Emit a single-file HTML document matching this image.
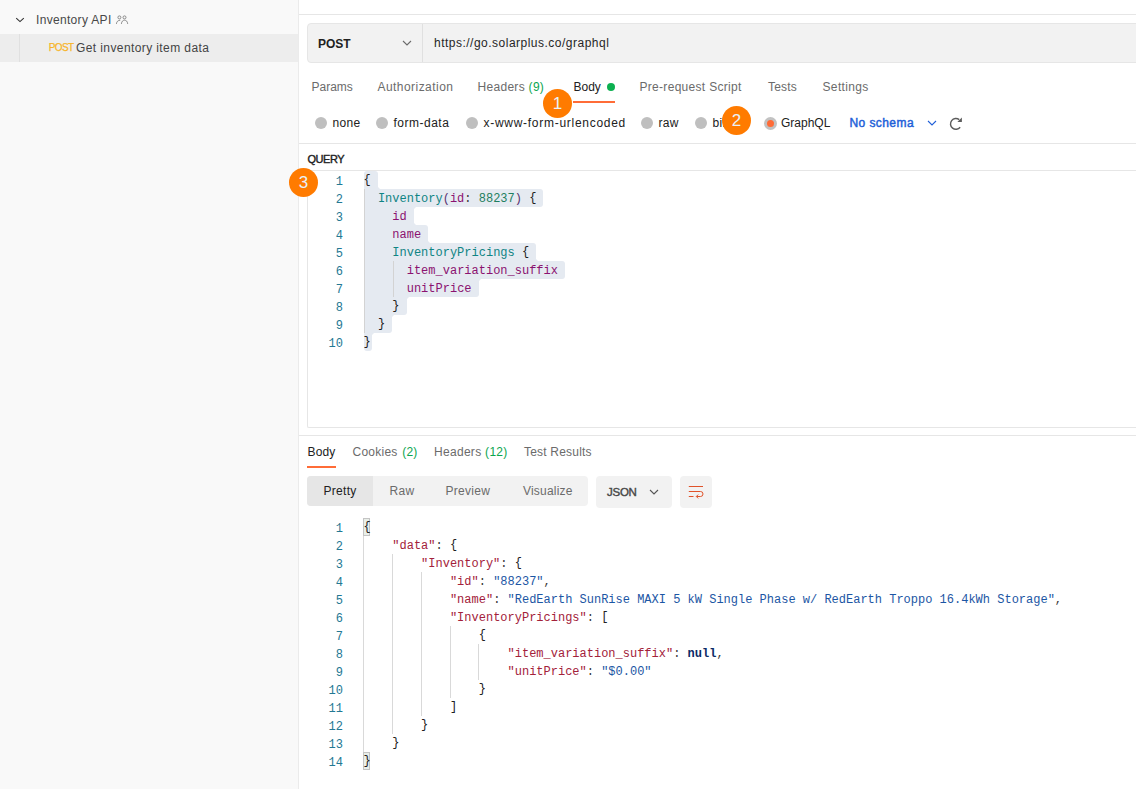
<!DOCTYPE html>
<html><head><meta charset="utf-8">
<style>
html,body{margin:0;padding:0;width:1136px;height:789px;overflow:hidden;background:#fff;}
body{position:relative;font-family:"Liberation Sans",sans-serif;font-size:12px;color:#212121;}
.a{position:absolute;}
.t{position:absolute;white-space:pre;line-height:14px;}
#side{position:absolute;left:0;top:0;width:298px;height:789px;background:#f9f9f9;border-right:1px solid #ebebeb;}
.hl{position:absolute;height:1px;background:#e6e6e6;}
.tab{color:#6b6b6b;}
.green{color:#0ba64f;}
.radio{position:absolute;width:12px;height:12px;border-radius:50%;background:#bfbfbf;top:117px;}
.badge{position:absolute;width:29px;height:29px;border-radius:50%;background:#ff7b00;color:#e9f1f8;font-size:17px;line-height:29px;text-align:center;}
.ln{position:absolute;left:299px;width:44px;text-align:right;font-family:"Liberation Mono",monospace;font-size:12px;line-height:18px;color:#237893;white-space:pre;}
.cl{position:absolute;left:363.5px;font-family:"Liberation Mono",monospace;font-size:12px;line-height:18px;white-space:pre;color:#212121;}
.sel{position:absolute;left:364px;height:18px;background:#e5eaf1;}
.cc{position:absolute;width:3px;height:3px;}
.br{position:relative;top:-0.8px;}
.guide{position:absolute;width:1px;background:#d3d3d3;}
.g2{background:#d9d9d9;}
.bm{position:absolute;left:363px;width:5px;height:16px;border:1px solid #c4c4c4;background:#e9efe9;}
.seg{position:absolute;top:476px;height:30px;background:#f2f2f2;border-radius:4px;}
</style></head><body>

<!-- sidebar -->
<div id="side">
  <svg class="a" style="left:10px;top:10px" width="20" height="20" viewBox="0 0 20 20"><path d="M6.2 8.1 L10 11.6 L13.8 8.1" fill="none" stroke="#333" stroke-width="1.1"/></svg>
  <div class="t" style="left:36px;top:13px;color:#484848;letter-spacing:0.32px">Inventory API</div>
  <svg class="a" style="left:110px;top:10px" width="25" height="20" viewBox="0 0 25 20"><g fill="none" stroke="#8a8a8a" stroke-width="1"><circle cx="9.4" cy="7.4" r="1.5"/><circle cx="14.5" cy="7.4" r="1.5"/><path d="M6.4 13.9 C6.6 11.6 8 10.3 10.3 10.2"/><path d="M11.4 13.9 C11.6 11.5 12.9 10.2 14.5 10.2 C16.2 10.2 17.5 11.5 17.7 13.9"/></g></svg>
  <div class="a" style="left:0;top:34px;width:298px;height:28px;background:#ededed"></div>
  <div class="a" style="left:19px;top:34px;width:1px;height:28px;background:#e0e0e0"></div>
  <div class="t" style="left:48.8px;top:40.6px;font-size:10px;color:#f7b52a;-webkit-text-stroke:0.25px #f7b52a;letter-spacing:-0.65px">POST</div>
  <div class="t" style="left:76px;top:40.5px;color:#444;letter-spacing:0.4px">Get inventory item data</div>
</div>

<!-- top line -->
<div class="hl" style="left:299px;top:14px;width:837px"></div>

<!-- url bar -->
<div class="a" style="left:307px;top:23px;width:840px;height:38px;background:#f2f2f2;border:1px solid #e6e6e6;border-radius:4px"></div>
<div class="a" style="left:422px;top:24px;width:1px;height:38px;background:#e0e0e0"></div>
<div class="t" style="left:318px;top:37px;font-weight:bold;color:#212121">POST</div>
<svg class="a" style="left:402px;top:40px" width="10" height="7" viewBox="0 0 10 7"><path d="M1 1 L5 5 L9 1" fill="none" stroke="#6b6b6b" stroke-width="1.1"/></svg>
<div class="t" style="left:434px;top:35.5px;color:#262626;letter-spacing:0.49px">https://go.solarplus.co/graphql</div>

<!-- request tabs -->
<div class="t tab" style="left:311.5px;top:79.5px">Params</div>
<div class="t tab" style="left:377.5px;top:79.5px;letter-spacing:0.45px">Authorization</div>
<div class="t tab" style="left:477.5px;top:79.5px;letter-spacing:0.3px">Headers <span class="green">(9)</span></div>
<div class="t" style="left:573.5px;top:79.5px;color:#212121">Body</div>
<div class="a" style="left:607px;top:83px;width:8px;height:8px;border-radius:50%;background:#0cb050"></div>
<div class="t tab" style="left:639.5px;top:79.5px;letter-spacing:0.3px">Pre-request Script</div>
<div class="t tab" style="left:768px;top:79.5px;letter-spacing:0.2px">Tests</div>
<div class="t tab" style="left:822.5px;top:79.5px;letter-spacing:0.35px">Settings</div>
<div class="a" style="left:573px;top:101px;width:42px;height:2px;background:#ff6c37"></div>

<!-- body type radios -->
<div class="radio" style="left:315px"></div>
<div class="t" style="left:332.5px;top:116px;letter-spacing:0.3px">none</div>
<div class="radio" style="left:376px"></div>
<div class="t" style="left:393.5px;top:116px;letter-spacing:0.5px">form-data</div>
<div class="radio" style="left:466px"></div>
<div class="t" style="left:483.5px;top:116px;letter-spacing:0.72px">x-www-form-urlencoded</div>
<div class="radio" style="left:641px"></div>
<div class="t" style="left:658.5px;top:116px;letter-spacing:0.3px">raw</div>
<div class="radio" style="left:695px"></div>
<div class="t" style="left:712.5px;top:116px;letter-spacing:0.3px">binary</div>
<div class="a" style="left:764px;top:117px;width:13px;height:13px;border-radius:50%;background:#c2c2c2"></div>
<div class="a" style="left:767px;top:120px;width:7px;height:7px;border-radius:50%;background:#ff6c37"></div>
<div class="t" style="left:781px;top:116px;color:#212121">GraphQL</div>
<div class="t" style="left:849.5px;top:116px;color:#2160d8;-webkit-text-stroke:0.45px #2160d8;letter-spacing:0.42px">No schema</div>
<svg class="a" style="left:927px;top:120px" width="10" height="7" viewBox="0 0 10 7"><path d="M1 1 L5 5 L9 1" fill="none" stroke="#2160d8" stroke-width="1.1"/></svg>
<svg class="a" style="left:949px;top:115px" width="15" height="16" viewBox="949 115 15 16"><path d="M959.22 119.64 A5.4 5.4 0 1 0 960.16 127.22" fill="none" stroke="#5c5c5c" stroke-width="1.45"/><path d="M961.9 117.6 L961.9 122.1 L957.4 122.1 Z" fill="#5c5c5c"/></svg>

<div class="hl" style="left:299px;top:143px;width:837px"></div>

<!-- query -->
<div class="t" style="left:307.5px;top:152px;font-size:11px;color:#212121;letter-spacing:-0.45px;-webkit-text-stroke:0.4px #212121">QUERY</div>
<div class="a" style="left:307px;top:170px;width:840px;height:256px;border:1px solid #e6e6e6;border-radius:0 0 2px 2px;border-right:none"></div>
<div class="sel" style="top:171px;width:13.8px;border-radius:3px 3px 0px 0px"></div>
<div class="cc" style="left:377.8px;top:186px;background:radial-gradient(circle at 100% 0%, #fff 2.6px, #e5eaf1 3.2px)"></div>
<div class="sel" style="top:189px;width:179.4px;border-radius:0px 3px 3px 0px"></div>
<div class="sel" style="top:207px;width:49.8px;border-radius:0px 0px 0px 0px"></div>
<div class="cc" style="left:413.8px;top:207px;background:radial-gradient(circle at 100% 100%, #fff 2.6px, #e5eaf1 3.2px)"></div>
<div class="cc" style="left:413.8px;top:222px;background:radial-gradient(circle at 100% 0%, #fff 2.6px, #e5eaf1 3.2px)"></div>
<div class="sel" style="top:225px;width:64.2px;border-radius:0px 3px 0px 0px"></div>
<div class="cc" style="left:428.2px;top:240px;background:radial-gradient(circle at 100% 0%, #fff 2.6px, #e5eaf1 3.2px)"></div>
<div class="sel" style="top:243px;width:172.2px;border-radius:0px 3px 0px 0px"></div>
<div class="cc" style="left:536.2px;top:258px;background:radial-gradient(circle at 100% 0%, #fff 2.6px, #e5eaf1 3.2px)"></div>
<div class="sel" style="top:261px;width:201.0px;border-radius:0px 3px 3px 0px"></div>
<div class="sel" style="top:279px;width:114.6px;border-radius:0px 0px 3px 0px"></div>
<div class="cc" style="left:478.6px;top:279px;background:radial-gradient(circle at 100% 100%, #fff 2.6px, #e5eaf1 3.2px)"></div>
<div class="sel" style="top:297px;width:42.6px;border-radius:0px 0px 3px 0px"></div>
<div class="cc" style="left:406.6px;top:297px;background:radial-gradient(circle at 100% 100%, #fff 2.6px, #e5eaf1 3.2px)"></div>
<div class="sel" style="top:315px;width:28.2px;border-radius:0px 0px 3px 0px"></div>
<div class="cc" style="left:392.2px;top:315px;background:radial-gradient(circle at 100% 100%, #fff 2.6px, #e5eaf1 3.2px)"></div>
<div class="sel" style="top:333px;width:7.6px;border-radius:0px 0px 3px 3px"></div>
<div class="cc" style="left:371.6px;top:333px;background:radial-gradient(circle at 100% 100%, #fff 2.6px, #e5eaf1 3.2px)"></div>
<div class="ln" style="top:172.5px">1</div>
<div class="cl" style="top:171.8px"><span class="br" style="color:#212121">{</span></div>
<div class="ln" style="top:190.5px">2</div>
<div class="cl" style="top:189.8px">  <span style="color:#0f8484">Inventory</span><span style="color:#5a3370">(</span><span style="color:#8b1270">id</span><span style="color:#3b3b3b">:</span> <span style="color:#1f7f5f">88237</span><span style="color:#5a3370">)</span> <span class="br" style="color:#212121">{</span></div>
<div class="ln" style="top:208.5px">3</div>
<div class="cl" style="top:207.8px">    <span style="color:#8b1270">id</span></div>
<div class="ln" style="top:226.5px">4</div>
<div class="cl" style="top:225.8px">    <span style="color:#8b1270">name</span></div>
<div class="ln" style="top:244.5px">5</div>
<div class="cl" style="top:243.8px">    <span style="color:#0f8484">InventoryPricings</span> <span class="br" style="color:#212121">{</span></div>
<div class="ln" style="top:262.5px">6</div>
<div class="cl" style="top:261.8px">      <span style="color:#8b1270">item_variation_suffix</span></div>
<div class="ln" style="top:280.5px">7</div>
<div class="cl" style="top:279.8px">      <span style="color:#8b1270">unitPrice</span></div>
<div class="ln" style="top:298.5px">8</div>
<div class="cl" style="top:297.8px">    <span class="br" style="color:#212121">}</span></div>
<div class="ln" style="top:316.5px">9</div>
<div class="cl" style="top:315.8px">  <span class="br" style="color:#212121">}</span></div>
<div class="ln" style="top:334.5px">10</div>
<div class="cl" style="top:333.8px"><span class="br" style="color:#212121">}</span></div>
<div class="guide" style="left:364px;top:189px;height:144px"></div>
<div class="guide" style="left:393px;top:261px;height:36px"></div>

<div class="hl" style="left:299px;top:435px;width:837px"></div>

<!-- response tabs -->
<div class="t" style="left:307.5px;top:445px;color:#212121;letter-spacing:0.15px">Body</div>
<div class="t tab" style="left:352.5px;top:445px;letter-spacing:0.25px">Cookies <span class="green" style="margin-left:1px">(2)</span></div>
<div class="t tab" style="left:434px;top:445px;letter-spacing:0.3px">Headers <span class="green">(12)</span></div>
<div class="t tab" style="left:524px;top:445px;letter-spacing:0.2px">Test Results</div>
<div class="a" style="left:307px;top:466px;width:29px;height:2px;background:#ff6c37"></div>

<div class="seg" style="left:307px;width:281px"></div>
<div class="seg" style="left:307px;width:66px;background:#e6e6e6;border-radius:4px 0 0 4px"></div>
<div class="t" style="left:323.5px;top:484px;color:#212121;letter-spacing:0.3px">Pretty</div>
<div class="t tab" style="left:389.5px;top:484px;letter-spacing:0.3px">Raw</div>
<div class="t tab" style="left:445.5px;top:484px;letter-spacing:0.3px">Preview</div>
<div class="t tab" style="left:523px;top:484px;letter-spacing:0.2px">Visualize</div>

<div class="seg" style="left:596px;width:76px;height:32px"></div>
<div class="t" style="left:607px;top:485px;font-size:11.5px;color:#474747;-webkit-text-stroke:0.4px #474747;letter-spacing:-0.25px">JSON</div>
<svg class="a" style="left:649px;top:489px" width="10" height="7" viewBox="0 0 10 7"><path d="M1 1 L5 5 L9 1" fill="none" stroke="#555" stroke-width="1.1"/></svg>
<div class="seg" style="left:680px;width:32px;height:32px"></div>
<svg class="a" style="left:686px;top:483px" width="20" height="18" viewBox="686 483 20 18"><g fill="none" stroke="#e0532a" stroke-width="1"><path d="M688.8 486.5 H703"/><path d="M688.8 491.5 H700.5 A2.5 2.5 0 0 1 700.5 496.5 H696.5"/><path d="M688.8 496.5 H693.5"/><path d="M698.2 494.6 L696.3 496.5 L698.2 498.4"/></g></svg>

<div class="bm" style="top:518px"></div>
<div class="bm" style="top:752px"></div>
<div class="ln" style="top:519.5px">1</div>
<div class="cl" style="top:518.8px"><span class="br" style="color:#212121">{</span></div>
<div class="ln" style="top:537.5px">2</div>
<div class="cl" style="top:536.8px">    <span style="color:#a3213a">"data"</span><span style="color:#3b3b3b">: </span><span class="br" style="color:#212121">{</span></div>
<div class="ln" style="top:555.5px">3</div>
<div class="cl" style="top:554.8px">        <span style="color:#a3213a">"Inventory"</span><span style="color:#3b3b3b">: </span><span class="br" style="color:#212121">{</span></div>
<div class="ln" style="top:573.5px">4</div>
<div class="cl" style="top:572.8px">            <span style="color:#a3213a">"id"</span><span style="color:#3b3b3b">: </span><span style="color:#1c56a4">"88237"</span><span style="color:#3b3b3b">,</span></div>
<div class="ln" style="top:591.5px">5</div>
<div class="cl" style="top:590.8px">            <span style="color:#a3213a">"name"</span><span style="color:#3b3b3b">: </span><span style="color:#1c56a4">"RedEarth SunRise MAXI 5 kW Single Phase w/ RedEarth Troppo 16.4kWh Storage"</span><span style="color:#3b3b3b">,</span></div>
<div class="ln" style="top:609.5px">6</div>
<div class="cl" style="top:608.8px">            <span style="color:#a3213a">"InventoryPricings"</span><span style="color:#3b3b3b">: </span><span class="br" style="color:#212121">[</span></div>
<div class="ln" style="top:627.5px">7</div>
<div class="cl" style="top:626.8px">                <span class="br" style="color:#212121">{</span></div>
<div class="ln" style="top:645.5px">8</div>
<div class="cl" style="top:644.8px">                    <span style="color:#a3213a">"item_variation_suffix"</span><span style="color:#3b3b3b">: </span><span style="color:#0b2a66;font-weight:bold">null</span><span style="color:#3b3b3b">,</span></div>
<div class="ln" style="top:663.5px">9</div>
<div class="cl" style="top:662.8px">                    <span style="color:#a3213a">"unitPrice"</span><span style="color:#3b3b3b">: </span><span style="color:#1c56a4">"$0.00"</span></div>
<div class="ln" style="top:681.5px">10</div>
<div class="cl" style="top:680.8px">                <span class="br" style="color:#212121">}</span></div>
<div class="ln" style="top:699.5px">11</div>
<div class="cl" style="top:698.8px">            <span class="br" style="color:#212121">]</span></div>
<div class="ln" style="top:717.5px">12</div>
<div class="cl" style="top:716.8px">        <span class="br" style="color:#212121">}</span></div>
<div class="ln" style="top:735.5px">13</div>
<div class="cl" style="top:734.8px">    <span class="br" style="color:#212121">}</span></div>
<div class="ln" style="top:753.5px">14</div>
<div class="cl" style="top:752.8px"><span class="br" style="color:#212121">}</span></div>
<div class="guide g2" style="left:363.2px;top:536px;height:216px"></div>
<div class="guide g2" style="left:392.0px;top:554px;height:180px"></div>
<div class="guide g2" style="left:420.8px;top:572px;height:144px"></div>
<div class="guide g2" style="left:449.6px;top:626px;height:72px"></div>
<div class="guide g2" style="left:478.4px;top:644px;height:36px"></div>

<!-- badges -->
<div class="badge" style="left:543px;top:89px">1</div>
<div class="badge" style="left:722px;top:105.5px">2</div>
<div class="badge" style="left:289px;top:168px">3</div>

</body></html>
